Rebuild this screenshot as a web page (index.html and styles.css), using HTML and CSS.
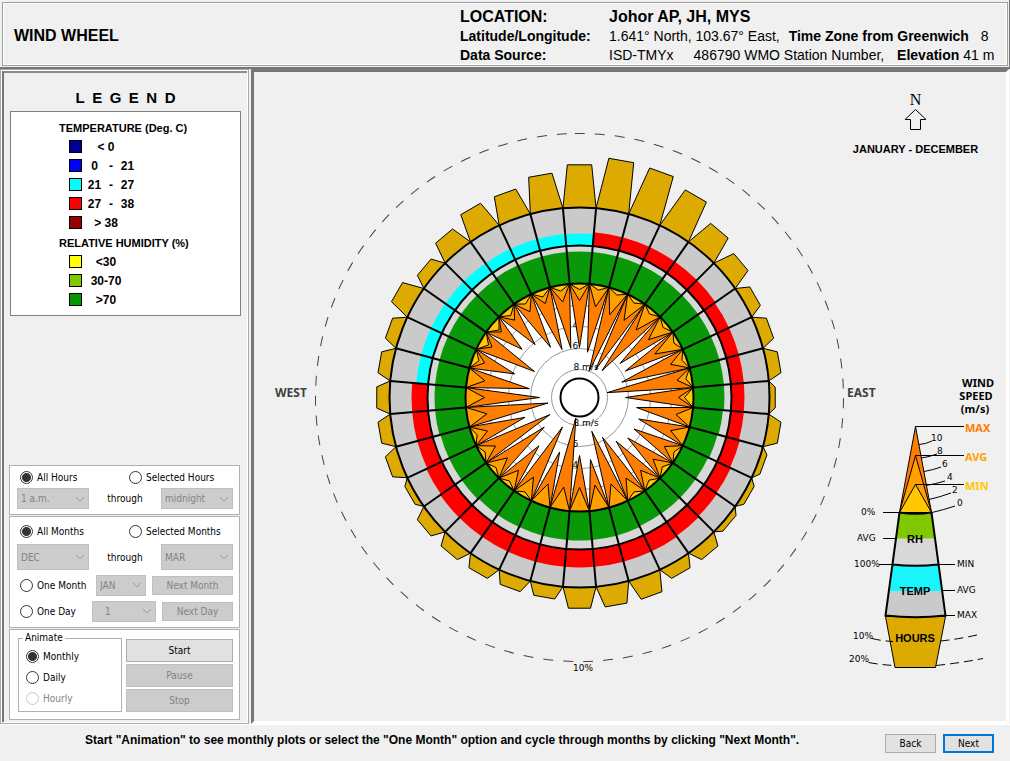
FILE: index.html
```
<!DOCTYPE html>
<html lang="en">
<head>
    <meta charset="UTF-8">
    <meta name="viewport" content="width=device-width, initial-scale=1.0">
    <title>Wind Wheel</title>
    <link rel="stylesheet" href="styles.css">
</head>
<body>
    <header class="header">
        <div class="header-box">
            <h1>WIND WHEEL</h1>
            <dl class="info">
                <dt class="big">LOCATION:</dt>
                <dd class="big">Johor AP, JH, MYS</dd>
                <dt>Latitude/Longitude:</dt>
                <dd>1.641° North, 103.67° East, <b class="zone">Time Zone from Greenwich</b> 8</dd>
                <dt>Data Source:</dt>
                <dd><span class="source">ISD-TMYx</span>486790 WMO Station Number, <b class="elevation">Elevation</b> 41 m</dd>
            </dl>
        </div>
    </header>

    <main class="main">
        <aside class="sidebar">
            <div class="sidebar-inner">
                <h2>L&ensp;E&ensp;G&ensp;E&ensp;N&ensp;D</h2>
                <div class="legend">
                    <h3>TEMPERATURE (Deg. C)</h3>
                    <ul>
                        <li><i class="swatch navy"></i><span>&lt; 0</span></li>
                        <li><i class="swatch blue"></i><span class="range"><span>0</span><span>-</span><span>21</span></span></li>
                        <li><i class="swatch cyan"></i><span class="range"><span>21</span><span>-</span><span>27</span></span></li>
                        <li><i class="swatch red"></i><span class="range"><span>27</span><span>-</span><span>38</span></span></li>
                        <li><i class="swatch maroon"></i><span>&gt; 38</span></li>
                    </ul>
                    <h3>RELATIVE HUMIDITY (%)</h3>
                    <ul>
                        <li><i class="swatch yellow"></i><span>&lt;30</span></li>
                        <li><i class="swatch lime"></i><span>30-70</span></li>
                        <li><i class="swatch green"></i><span>&gt;70</span></li>
                    </ul>
                </div>

                <form class="controls">
                    <div class="group hours">
                        <div class="pair">
                            <label><input type="radio" name="hours" checked>All Hours</label>
                            <label><input type="radio" name="hours">Selected Hours</label>
                        </div>
                        <div class="span">
                            <select aria-label="First hour" disabled><option>1 a.m.</option></select>
                            <span>through</span>
                            <select aria-label="Last hour" disabled><option>midnight</option></select>
                        </div>
                    </div>

                    <div class="group months">
                        <div class="pair">
                            <label><input type="radio" name="months" checked>All Months</label>
                            <label><input type="radio" name="months">Selected Months</label>
                        </div>
                        <div class="span tall">
                            <select aria-label="First month" disabled><option>DEC</option></select>
                            <span>through</span>
                            <select aria-label="Last month" disabled><option>MAR</option></select>
                        </div>
                        <div class="single">
                            <label><input type="radio" name="months">One Month</label>
                            <select class="month" aria-label="Month" disabled><option>JAN</option></select>
                            <button type="button" class="next-month" disabled>Next Month</button>
                        </div>
                        <div class="single">
                            <label><input type="radio" name="months">One Day</label>
                            <select class="day" aria-label="Day" disabled><option>1</option></select>
                            <button type="button" class="next-day" disabled>Next Day</button>
                        </div>
                    </div>

                    <div class="group animate">
                        <fieldset>
                            <legend>Animate</legend>
                            <label><input type="radio" name="animate" checked>Monthly</label>
                            <label><input type="radio" name="animate">Daily</label>
                            <label class="off"><input type="radio" name="animate" disabled>Hourly</label>
                        </fieldset>
                        <div class="player">
                            <button type="button">Start</button>
                            <button type="button" disabled>Pause</button>
                            <button type="button" disabled>Stop</button>
                        </div>
                    </div>
                </form>
            </div>
        </aside>

        <section class="stage">
            <svg class="chart" viewBox="254 72 752 649">
                <!-- wheel, filled in by wheel.js -->
                <g id="wheel" transform="translate(579.5 397.5)"></g>
                <text class="side" x="275" y="397">WEST</text>
                <text class="side" x="847" y="397">EAST</text>
                <text class="tick" x="573" y="671">10%</text>

                <!-- north arrow -->
                <text class="north" x="915.5" y="105">N</text>
                <path class="thin" d="M915.5 109.5L926 119.5H920.5V129.5H910.5V119.5H905Z"/>
                <text class="period" x="915.5" y="153">JANUARY - DECEMBER</text>

                <!-- key -->
                <text class="speed" x="978" y="387">WIND</text>
                <text class="speed" x="976" y="400">SPEED</text>
                <text class="speed" x="975" y="413">(m/s)</text>
                <path class="hours-bar" d="M885.5 616.5L895 667.5H935.5L945.5 616.5Z"/>
                <path fill="#d8d8d8" d="M899.5 512.5Q915.5 515 931.5 512.5L938.5 564.5Q915.5 567 892.5 564.5Z"/>
                <path fill="#80c800" d="M899.5 512.5Q915.5 515 931.5 512.5L935 538.5H896Z"/>
                <path fill="#cacaca" d="M892.5 564.5Q915.5 567 938.5 564.5L945.5 615.5Q915.5 619 885.5 615.5Z"/>
                <path fill="#19f5fa" d="M892.5 564.5Q915.5 567 938.5 564.5L942 591H889Z"/>
                <path class="frame" d="M899.5 512.5L885.5 615.5Q915.5 619 945.5 615.5L931.5 512.5M892.5 564.5Q915.5 567 938.5 564.5"/>
                <path class="max" d="M899.5 512.5L915.5 426.5L931.5 512.5Z"/>
                <path class="avg" d="M899.5 512.5L915.5 455.5L931.5 512.5Z"/>
                <path class="min" d="M899.5 512.5L915.5 484.5L931.5 512.5Z"/>
                <path class="frame" d="M899.5 512.5Q915.5 515 931.5 512.5"/>
                <path class="thin" d="M915.5 426.5H964M915.5 455.5H964M915.5 484.5H964M883 512.5H899M883 538.5H897M879 564.5H892M939 564.5H955M943 590.5H955M946 615.5H955"/>
                <path class="thin" d="M919 444.5Q926 444 932 441M921 458Q929 457 937 454M924 471.5Q933 470 941 467M926 485.5Q935 484 945 481M929 499.5Q940 497 951 493M932 512.5Q943 510 955 506"/>
                <path class="thin dash" d="M872 638.5Q882 641 893 641.5M940.5 641Q960 639 979 634.5M868.5 662.5Q882 665 895 665.5M936 665.5Q960 663 983 658.5"/>
                <text class="word max-word" x="965" y="432">MAX</text>
                <text class="word avg-word" x="965" y="461">AVG</text>
                <text class="word min-word" x="965" y="490">MIN</text>
                <text class="tick" x="931" y="441">10</text>
                <text class="tick" x="937" y="454">8</text>
                <text class="tick" x="942" y="467">6</text>
                <text class="tick" x="947" y="480">4</text>
                <text class="tick" x="952" y="493">2</text>
                <text class="tick" x="957" y="506">0</text>
                <text class="tick" x="861" y="515">0%</text>
                <text class="tick" x="857" y="541">AVG</text>
                <text class="tick" x="854" y="567">100%</text>
                <text class="tick" x="957" y="567">MIN</text>
                <text class="tick" x="957" y="593">AVG</text>
                <text class="tick" x="957" y="618">MAX</text>
                <text class="tick" x="853" y="639">10%</text>
                <text class="tick" x="849" y="662">20%</text>
                <text class="part" x="915" y="543">RH</text>
                <text class="part" x="915" y="595">TEMP</text>
                <text class="part" x="915" y="642">HOURS</text>
            </svg>
        </section>
    </main>

    <footer class="footer">
        <p>Start "Animation" to see monthly plots or select the "One Month" option and cycle through months by clicking "Next Month".</p>
        <button type="button">Back</button>
        <button type="button" class="primary">Next</button>
    </footer>

    <script src="wheel.js"></script>
</body>
</html>
```
FILE: styles.css
```
* {
    box-sizing: border-box;
}

body {
    display: flex;
    flex-direction: column;
    min-height: 100vh;
    margin: 0;
    background-color: #f0f0f0;
    color: #000;
    font-family: "Liberation Sans", Arial, sans-serif;
}

h1, h2, h3, ul, dl, dd, p {
    margin: 0;
    padding: 0;
}

/* header */
.header {
    padding: 2px 1px 1px 2px;
    border-right: 1px solid #777;
    border-bottom: 2px solid #777;
}

.header-box {
    display: flex;
    align-items: center;
    justify-content: space-between;
    height: 64px;
    padding: 4px 10px 0 11px;
    border: 1px solid #a0a0a0;
    box-shadow: inset 0 0 0 1px #fff;
}

h1 {
    font-size: 16px;
}

.info {
    display: grid;
    grid-template-columns: 149px auto;
    width: 537px;
    font-size: 14px;
    line-height: 19px;
    white-space: nowrap;
}

.info dt {
    font-weight: bold;
}

.info .big {
    font-size: 16px;
    font-weight: bold;
    line-height: 20px;
}

.zone {
    margin: 0 8px 0 5px;
}

.source {
    margin-right: 20px;
}

.elevation {
    margin-left: 9px;
}

/* panels */
.main {
    display: flex;
    flex: 1;
    gap: 2px;
}

.sidebar {
    flex: none;
    width: 249px;
    padding: 1px;
    border: 1px solid #a8a8a8;
    background-color: #fff;
}

.sidebar-inner {
    display: flex;
    flex-direction: column;
    height: 100%;
    padding: 14px 6px 2px 6px;
    border-top: 2px solid #8a8a8a;
    border-left: 2px solid #777;
    background-color: #f0f0f0;
}

h2 {
    margin-bottom: 2px;
    font-size: 15px;
    line-height: 22px;
    text-align: center;
}

.stage {
    display: flex;
    flex: 1;
    min-width: 0;
    margin-right: 1px;
    border: 3px solid #fff;
    border-top-color: #777;
    border-left-color: #777;
}

.chart {
    display: block;
    width: 100%;
    height: 100%;
}

/* legend */
.legend {
    width: 231px;
    padding: 7px 0 6px;
    border: 1px solid #808080;
    background-color: #fff;
    font-size: 12px;
    font-weight: bold;
}

.legend h3 {
    padding-left: 48px;
    font-size: 11px;
    line-height: 18px;
}

.legend ul {
    list-style: none;
}

.legend ul + h3 {
    margin-top: 2px;
}

.legend li {
    display: flex;
    align-items: center;
    gap: 5px;
    height: 19px;
    padding-left: 58px;
}

.legend li > span {
    width: 38px;
    text-align: center;
}

.legend li > .range {
    display: grid;
    grid-template-columns: 15px 18px 15px;
    width: auto;
}

.swatch {
    width: 13px;
    height: 13px;
    border: 1px solid #000;
}

.navy { background-color: #000096; }
.blue { background-color: #0000ff; }
.cyan { background-color: #00ffff; }
.red { background-color: #ff0000; }
.maroon { background-color: #960000; }
.yellow { background-color: #ffff00; }
.lime { background-color: #80c800; }
.green { background-color: #009600; }

/* controls */
.controls {
    display: flex;
    flex-direction: column;
    gap: 1px;
    width: 231px;
    margin-top: auto;
    margin-left: -1px;
}

.controls, .footer button {
    font-family: "DejaVu Sans Condensed", "DejaVu Sans", sans-serif;
    font-size: 10px;
}

.group {
    padding: 5px 6px 5px 7px;
    border: 1px solid #b0b0b0;
    background-color: #fff;
}

.controls label {
    display: flex;
    align-items: center;
    gap: 4px;
    padding-left: 3px;
}

input[type="radio"] {
    appearance: none;
    width: 13px;
    height: 13px;
    margin: 0;
    border: 1px solid #333;
    border-radius: 50%;
    background-color: #fff;
}

input[type="radio"]:checked {
    background: radial-gradient(circle, #333 4px, #fff 5px);
}

input[type="radio"]:disabled {
    border-color: #c8c8c8;
}

select {
    appearance: none;
    height: 21px;
    padding: 0 3px;
    border: 1px solid #bfbfbf;
    border-radius: 0;
    background: #ccc url("data:image/svg+xml,%3Csvg xmlns='http://www.w3.org/2000/svg' width='10' height='6'%3E%3Cpath d='M1 1l4 4 4-4' fill='none' stroke='%23999'/%3E%3C/svg%3E") no-repeat right 3px center;
    color: #838383;
    font: inherit;
    opacity: 1;
}

button {
    padding: 0;
    border: 1px solid #adadad;
    background-color: #e1e1e1;
    color: #000;
    font: inherit;
}

button:disabled {
    border-color: #bfbfbf;
    background-color: #ccc;
    color: #838383;
}

.pair {
    display: grid;
    grid-template-columns: 109px auto;
    height: 13px;
}

.span {
    display: grid;
    grid-template-columns: 72px 1fr 72px;
    align-items: center;
    margin-top: 4px;
    text-align: center;
}

.months {
    padding-top: 8px;
    padding-bottom: 3px;
}

.tall {
    margin: 6px 0 2px;
}

.tall select {
    height: 26px;
}

.single {
    display: flex;
    align-items: center;
    height: 26px;
}

.single label {
    flex: 1;
}

.month {
    width: 50px;
    margin-right: 6px;
}

.day {
    width: 64px;
    margin-right: 6px;
    padding-left: 12px;
}

.single button {
    height: 19px;
}

.next-month {
    width: 81px;
}

.next-day {
    width: 71px;
}

.animate {
    display: flex;
    gap: 4px;
    padding: 2px 6px 7px 8px;
}

fieldset {
    width: 104px;
    margin: 0;
    padding: 2px 4px;
    border: 1px solid #b0b0b0;
}

legend {
    padding: 0 2px;
    line-height: 12px;
}

fieldset label {
    height: 21px;
}

.off {
    color: #838383;
}

.player {
    display: flex;
    flex: 1;
    flex-direction: column;
    gap: 2px;
    padding-top: 7px;
}

.player button {
    flex: 1;
}

/* chart */
.chart .side {
    fill: #404040;
    font: bold 12px "Noto Sans", sans-serif;
}

.chart .tick {
    fill: #000;
    font: 9px "DejaVu Sans", sans-serif;
}

.chart .north {
    font: 16px "Liberation Serif", serif;
    text-anchor: middle;
}

.chart .period, .chart .part {
    font-size: 11px;
    font-weight: bold;
    text-anchor: middle;
}

.chart .speed {
    font: bold 11px "Noto Sans", sans-serif;
    text-anchor: middle;
}

.chart .word {
    font: bold 11px "Noto Sans", sans-serif;
}

.max-word { fill: #ff7d00; }
.avg-word { fill: #ffa000; }
.min-word { fill: #ffc800; }

.thin {
    fill: none;
    stroke: #000;
}

.dash {
    stroke-dasharray: 9 5;
}

.frame {
    fill: none;
    stroke: #000;
    stroke-width: 2;
}

.hours-bar, .max, .avg, .min {
    stroke: #000;
}

.hours-bar { fill: #dcaa00; }
.max { fill: #ff7d00; }
.avg { fill: #ffa000; }
.min { fill: #ffc800; }

.scale {
    fill: none;
    stroke: #999;
}

.limit {
    fill: none;
    stroke: #444;
    stroke-dasharray: 10 10;
}

/* footer */
.footer {
    display: flex;
    align-items: center;
    gap: 7px;
    height: 37px;
    padding: 0 16px 0 85px;
    border-top: 1px solid #fff;
}

.footer p {
    flex: 1;
    padding-bottom: 6px;
    font-size: 12px;
    font-weight: bold;
}

.footer button {
    width: 51px;
    height: 19px;
}

.footer .primary {
    border: 2px solid #0078d7;
}
```
FILE: wheel.js
```
// one entry per 10 degree sector, clockwise from north; values are radii in px
var hours = [233, 241, 240, 233, 218, 211, 203, 203, 203, 196, 203, 196, 196, 196, 203, 203, 211, 211,
             211, 203, 203, 203, 203, 203, 196, 203, 203, 203, 203, 203, 211, 203, 211, 218, 218, 226];
var temp = [164, 166, 166, 166, 166, 166, 165, 165, 165, 165, 165, 166, 167, 168, 169, 170, 170, 170,
            170, 170, 170, 170, 170, 170, 169, 168, 168, 168, 164, 164, 164, 164, 164, 164, 164, 164];
var humidity = [146, 146, 146, 146, 145, 145, 145, 145, 145, 145, 144, 143, 142, 142, 142, 142, 143, 143,
                143, 143, 143, 143, 143, 144, 144, 144, 145, 145, 145, 145, 145, 145, 145, 146, 146, 146];
var max = [50, 46, 28, 32, 35, 53, 53, 45, 28, 46, 58, 63, 63, 63, 57, 46, 36, 63,
           58, 21, 58, 34, 63, 46, 34, 58, 32, 40, 51, 69, 52, 75, 69, 58, 51, 50];
var avg = [97, 92, 88, 89, 88, 90, 87, 97, 99, 99, 98, 97, 98, 96, 95, 93, 92, 89,
           90, 91, 92, 92, 95, 94, 97, 98, 94, 95, 96, 101, 101, 102, 101, 99, 100, 97];
var min = [108, 109, 109, 109, 109, 109, 109, 109, 108, 105, 0, 0, 109, 108, 108, 109, 0, 0,
           0, 0, 0, 109, 109, 109, 109, 109, 0, 0, 0, 107, 105, 105, 107, 108, 107, 108];

var wheel = document.getElementById("wheel");
var speedRadius = 114;
var tempRadius = 152;
var hoursRadius = 190;

function add(name, attrs, text) {
    var el = document.createElementNS("http://www.w3.org/2000/svg", name);
    for (var key in attrs) {
        el.setAttribute(key, attrs[key]);
    }
    if (text) {
        el.textContent = text;
    }
    wheel.appendChild(el);
}

function point(r, degrees) {
    var a = degrees * Math.PI / 180;
    return (r * Math.sin(a)).toFixed(2) + " " + (-r * Math.cos(a)).toFixed(2);
}

function band(inner, outer, i, color) {
    var a = i * 10 - 5;
    var b = i * 10 + 5;
    add("path", {
        d: "M" + point(inner, a) + "L" + point(outer, a) +
           "A" + outer + " " + outer + " 0 0 1 " + point(outer, b) +
           "L" + point(inner, b) +
           "A" + inner + " " + inner + " 0 0 0 " + point(inner, a) + "Z",
        fill: color
    });
}

function spike(tip, i, cls) {
    add("path", {
        d: "M" + point(speedRadius, i * 10 - 5) + "L" + point(tip, i * 10) + "L" + point(speedRadius, i * 10 + 5),
        "class": cls
    });
}

add("circle", { r: 264, "class": "limit", transform: "rotate(-91)" });

for (var i = 0; i < 36; i++) {
    var c = i * 10;
    add("path", {
        d: "M" + point(hoursRadius, c - 5) + "L" + point(hours[i], c - 3) +
           "L" + point(hours[i], c + 3) + "L" + point(hoursRadius, c + 5) + "Z",
        "class": "hours-bar"
    });
    band(tempRadius, hoursRadius, i, "#cacaca");
    // sectors 28 to 0 stay under 27 degrees
    band(tempRadius, temp[i], i, i === 0 || i > 27 ? "#00ffff" : "#ff0000");
    band(speedRadius, tempRadius, i, "#d8d8d8");
    band(speedRadius, humidity[i], i, "#089808");
}

add("circle", { r: speedRadius, fill: "#fff" });
[92, 71, 49, 28].forEach(function (r) {
    add("circle", { r: r, "class": "scale" });
});
add("text", { x: -6, y: -28, "class": "tick" }, "8 m/s");
add("text", { x: -7, y: -49, "class": "tick" }, "6");
add("text", { x: -7, y: -70, "class": "tick" }, "4");
add("text", { x: -6, y: 28, "class": "tick" }, "8 m/s");
add("text", { x: -7, y: 49, "class": "tick" }, "6");
add("text", { x: -7, y: 70, "class": "tick" }, "4");

for (i = 0; i < 36; i++) {
    spike(max[i], i, "max");
    spike(avg[i], i, "avg");
    if (min[i]) {
        spike(min[i], i, "min");
    }
}

for (i = 0; i < 36; i++) {
    add("path", { d: "M" + point(speedRadius, i * 10 + 5) + "L" + point(hoursRadius, i * 10 + 5), "class": "frame" });
}
[19, speedRadius, tempRadius, hoursRadius].forEach(function (r) {
    add("circle", { r: r, "class": "frame" });
});
```
